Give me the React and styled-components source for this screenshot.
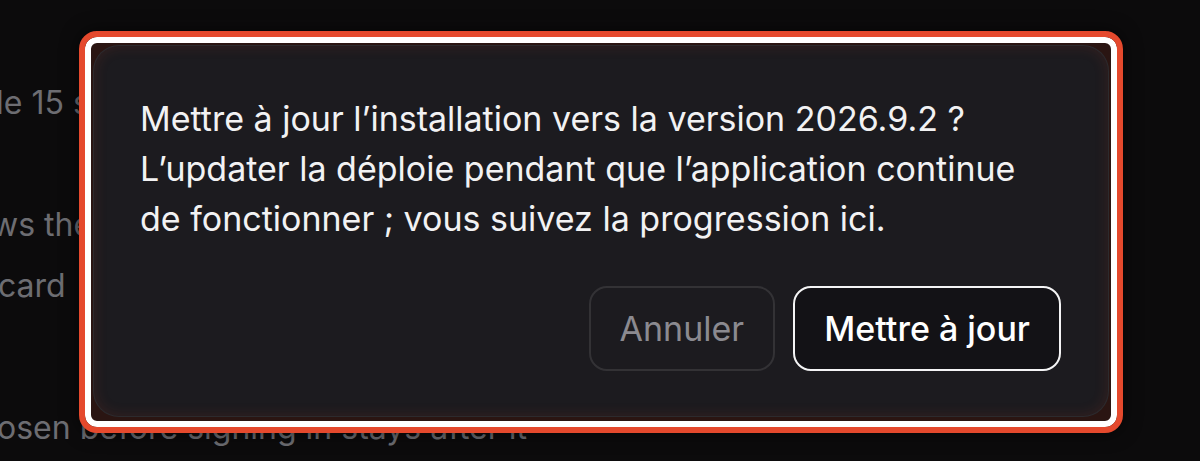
import React from "react"
import styled, { createGlobalStyle } from "styled-components"

const GlobalStyle = createGlobalStyle`
* {
  box-sizing: border-box;
  margin: 0;
}

html,
body {
  margin: 0;
  background: #0c0b0c;
  font-family: Inter, "Noto Sans", "Liberation Sans", sans-serif;
  font-optical-sizing: none;
  font-variation-settings: "opsz" 14;
  overflow: hidden;
}

button {
  font-optical-sizing: none;
  font-variation-settings: "opsz" 14;
}
`

const Page = styled.main`
  position: relative;
  width: 1200px;
  height: 461px;
  overflow: hidden;
`

const Backdrop = styled.div`
  display: flex;
  flex-direction: column;
  padding-top: 85px;
  color: #6d6d72;
  font-size: 32px;
  line-height: 36px;
  white-space: nowrap;
`

const BackLine = styled.p`
  margin-left: ${(p) => p.$shift || 0}px;
  margin-top: ${(p) => p.$gap || 0}px;
`

const Highlight = styled.div`
  position: absolute;
  left: 79px;
  top: 31px;
  width: 1044px;
  height: 402px;
  border: 6px solid #e5492d;
  border-radius: 18px;
  background: #2a1512;
  box-shadow: inset 0 0 0 6px #ffffff, 0 0 18px rgba(0, 0, 0, 0.6);
  padding: 8px 8px 10px;
  display: flex;
`

const Dialog = styled.section`
  flex: 1;
  display: flex;
  flex-direction: column;
  border-radius: 26px;
  background: #1c1b1f;
  border: 1px solid rgba(255, 255, 255, 0.07);
  box-shadow: inset 0 0 14px rgba(190, 60, 40, 0.16);
  padding: 48px 47px 45px 46px;
`

const Message = styled.p`
  color: #f2f2f3;
  font-size: 34px;
  line-height: 50px;
  white-space: nowrap;
`

const Actions = styled.div`
  display: flex;
  justify-content: flex-end;
  gap: 18px;
  margin-top: auto;
`

const Button = styled.button`
  height: 85px;
  padding: 0 29px;
  border-radius: 18px;
  font-family: inherit;
  font-size: 34px;
  font-weight: ${(p) => (p.$primary ? 500 : 400)};
  color: ${(p) => (p.$primary ? "#ffffff" : "#8b8a90")};
  background: ${(p) => (p.$primary ? "#131216" : "transparent")};
  border: 2px solid ${(p) => (p.$primary ? "#f4f4f5" : "rgba(255, 255, 255, 0.1)")};
  cursor: pointer;
`

const App = () => {
  return (
    <>
      <GlobalStyle />
      <Page>
        <Backdrop>
          <BackLine $shift={-4}>le 15 secondes</BackLine>
          <BackLine $shift={-8} $gap={86}>ws the</BackLine>
          <BackLine $shift={-2} $gap={25}>card</BackLine>
          <BackLine $shift={-3} $gap={106}>osen before signing in stays after it</BackLine>
        </Backdrop>
        <Highlight>
          <Dialog role="dialog">
            <Message>
              Mettre à jour l’installation vers la version 2026.9.2 ?
              <br />
              L’updater la déploie pendant que l’application continue
              <br />
              de fonctionner ; vous suivez la progression ici.
            </Message>
            <Actions>
              <Button>Annuler</Button>
              <Button $primary>Mettre à jour</Button>
            </Actions>
          </Dialog>
        </Highlight>
      </Page>
    </>
  )
}

export default App
